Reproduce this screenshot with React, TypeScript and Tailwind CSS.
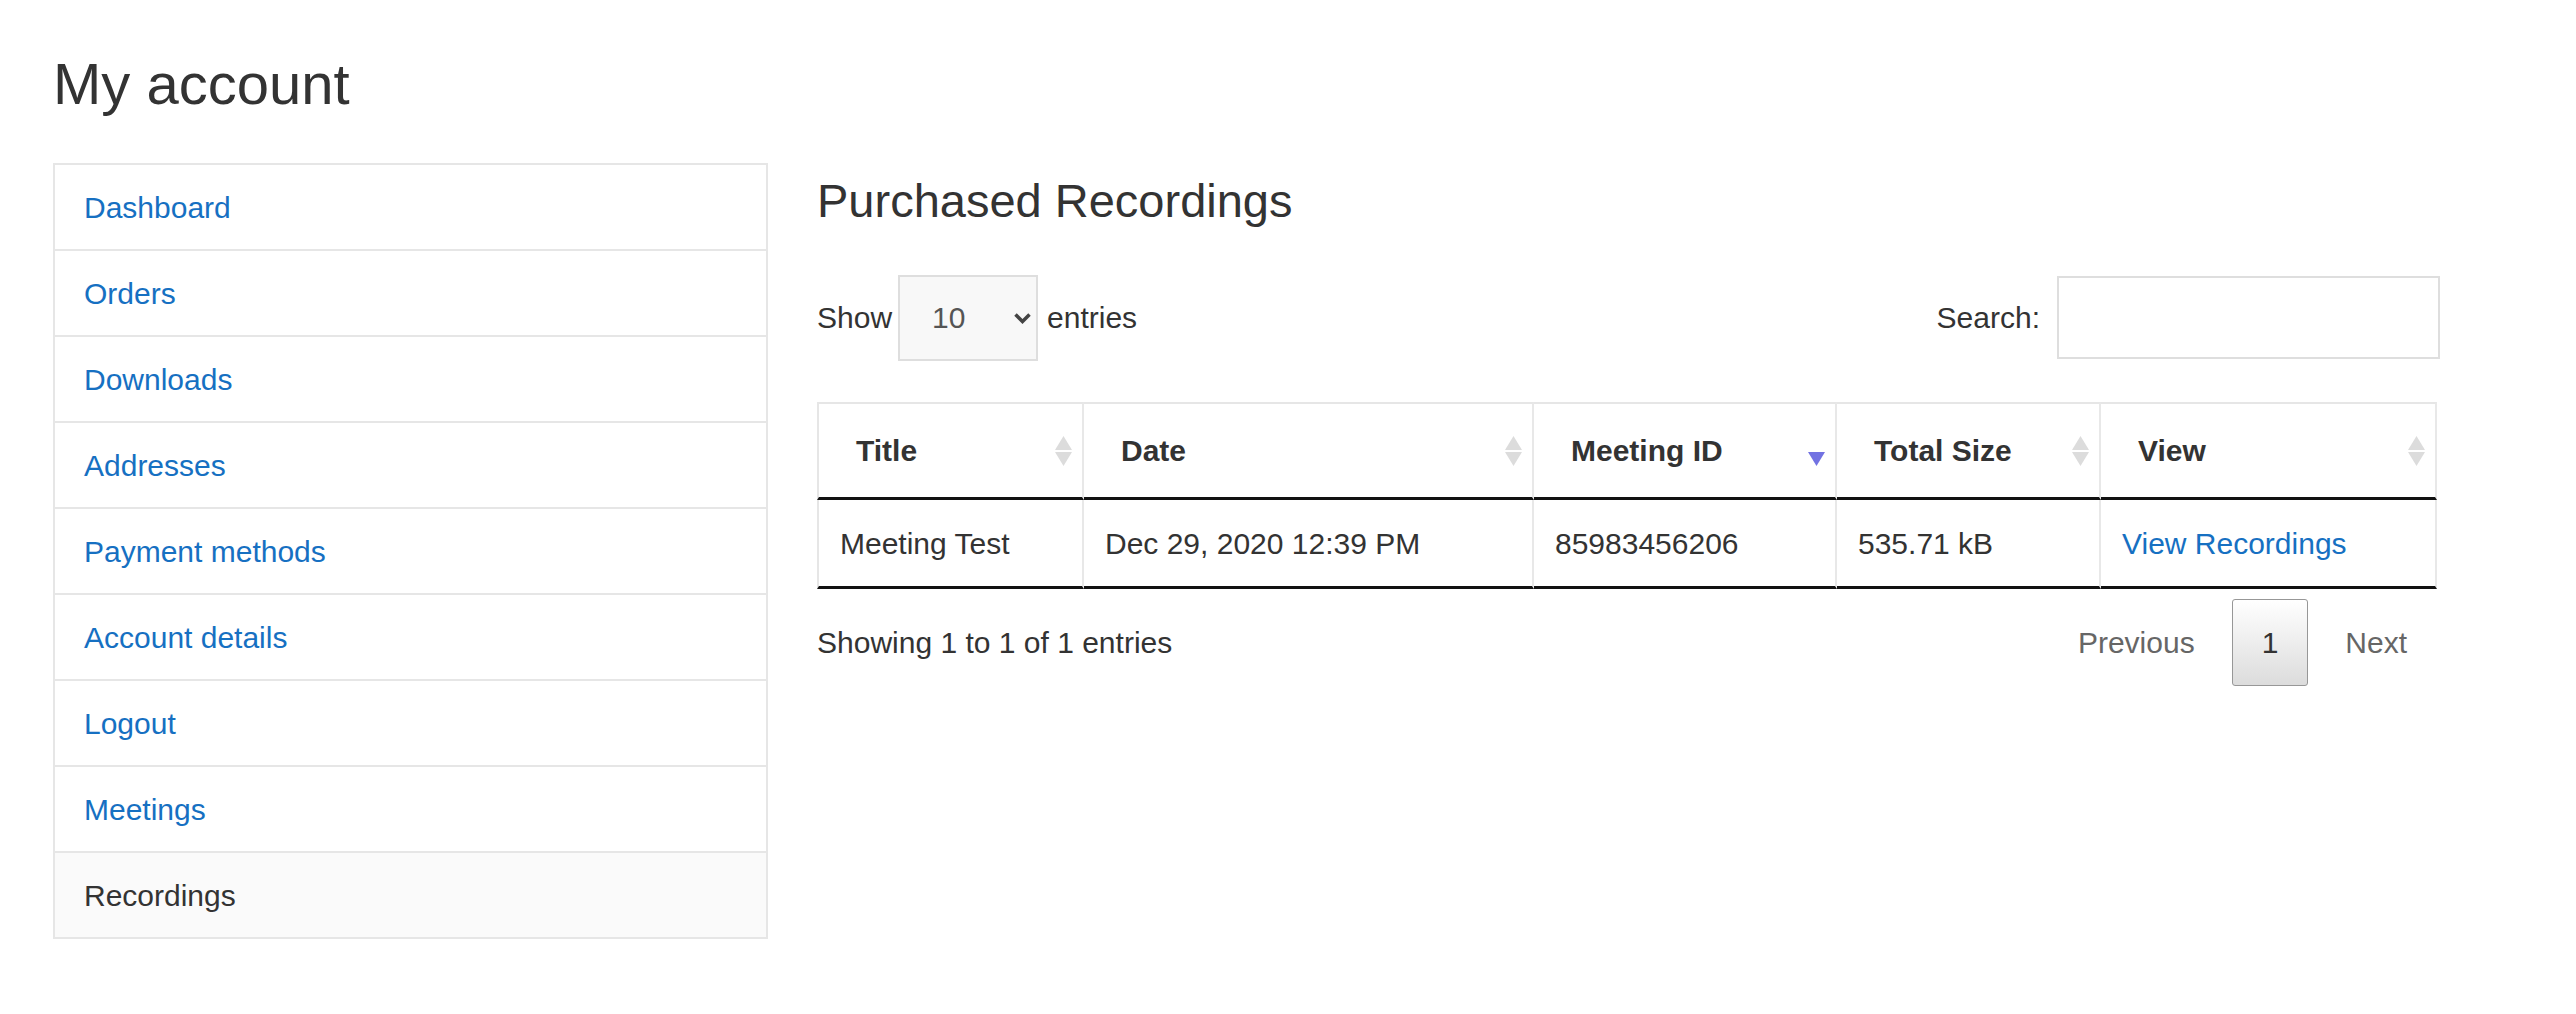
import { useState } from "react";

const navItems = [
  "Dashboard",
  "Orders",
  "Downloads",
  "Addresses",
  "Payment methods",
  "Account details",
  "Logout",
  "Meetings",
  "Recordings",
];

const columns = [
  { label: "Title", width: 267, sort: "both" },
  { label: "Date", width: 450, sort: "both" },
  { label: "Meeting ID", width: 303, sort: "desc" },
  { label: "Total Size", width: 264, sort: "both" },
  { label: "View", width: 336, sort: "both" },
];

function SortIcon({ sort }: { sort: string }) {
  return (
    <svg
      width="17"
      height="30"
      viewBox="0 0 17 30"
      className="absolute right-[10px] top-1/2 -translate-y-1/2"
    >
      {sort === "both" && <polygon points="8.5,0 17,14 0,14" fill="#dcdcdc" />}
      <polygon
        points="0,16 17,16 8.5,30"
        fill={sort === "desc" ? "#7272e2" : "#dcdcdc"}
      />
    </svg>
  );
}

export default function App() {
  const [entries, setEntries] = useState("10");
  const [query, setQuery] = useState("");

  return (
    <div className="min-h-screen bg-white pl-[53px] pt-[55px] font-['Liberation_Sans',Arial,sans-serif] text-[#333]">
      <h1 className="text-[58px] leading-none font-normal">My account</h1>

      <div className="mt-[50px] flex items-start gap-[49px]">
        <nav className="w-[715px] border-2 border-b-0 border-[#e6e6e6]">
          {navItems.map((item) => {
            const active = item === "Recordings";
            return (
              <a
                key={item}
                href="#"
                className={
                  active
                    ? "flex h-[86px] items-center border-b-2 border-[#e6e6e6] bg-[#fafafa] pl-[29px] text-[30px] text-[#333]"
                    : "flex h-[86px] items-center border-b-2 border-[#e6e6e6] pl-[29px] text-[30px] text-[#1670c2]"
                }
              >
                {item}
              </a>
            );
          })}
        </nav>

        <div className="w-[1620px] pt-[14px]">
          <h2 className="text-[47px] leading-none font-normal">Purchased Recordings</h2>

          <div className="mt-[50px] flex h-[87px] items-center justify-between text-[30px]">
            <div className="flex items-center">
              <span>Show</span>
              <div className="relative ml-[6px] h-[86px] w-[140px]">
                <select
                  value={entries}
                  onChange={(e) => setEntries(e.target.value)}
                  className="h-full w-full appearance-none border-2 border-[#dedede] bg-[#f8f8f8] pl-[32px] text-[30px] text-[#555] outline-none"
                >
                  <option value="10">10</option>
                  <option value="25">25</option>
                  <option value="50">50</option>
                  <option value="100">100</option>
                </select>
                <svg
                  width="19"
                  height="12"
                  viewBox="0 0 19 12"
                  className="pointer-events-none absolute right-[6px] top-1/2 -translate-y-1/2"
                >
                  <polyline
                    points="2.5,2.5 9.5,9.5 16.5,2.5"
                    fill="none"
                    stroke="#444"
                    strokeWidth="3.5"
                  />
                </svg>
              </div>
              <span className="ml-[9px]">entries</span>
            </div>

            <div className="-mr-[3px] flex items-center">
              <span>Search:</span>
              <input
                value={query}
                onChange={(e) => setQuery(e.target.value)}
                className="ml-[17px] h-[83px] w-[383px] border-2 border-[#dedede] px-3 text-[30px] outline-none"
              />
            </div>
          </div>

          <table className="mt-[41px] w-[1620px] table-fixed border-separate border-spacing-0 text-[30px]">
            <colgroup>
              {columns.map((c) => (
                <col key={c.label} style={{ width: c.width }} />
              ))}
            </colgroup>
            <thead>
              <tr>
                {columns.map((c, i) => (
                  <th
                    key={c.label}
                    className={
                      (i === 0 ? "border-l-2 " : "") +
                      "relative h-[98px] border-t-2 border-r-2 border-b-[3px] border-t-[#e6e6e6] border-r-[#e8e8e8] border-l-[#e6e6e6] border-b-[#111] pl-[37px] text-left font-bold"
                    }
                  >
                    {c.label}
                    <SortIcon sort={c.sort} />
                  </th>
                ))}
              </tr>
            </thead>
            <tbody>
              <tr>
                {["Meeting Test", "Dec 29, 2020 12:39 PM", "85983456206", "535.71 kB"].map(
                  (v, i) => (
                    <td
                      key={v}
                      className={
                        (i === 0 ? "border-l-2 border-l-[#e6e6e6] " : "") +
                        "h-[89px] border-r-2 border-b-[3px] border-r-[#e8e8e8] border-b-[#111] pl-[21px]"
                      }
                    >
                      {v}
                    </td>
                  )
                )}
                <td className="h-[89px] border-r-2 border-b-[3px] border-r-[#e8e8e8] border-b-[#111] pl-[21px]">
                  <a href="#" className="text-[#1670c2]">
                    View Recordings
                  </a>
                </td>
              </tr>
            </tbody>
          </table>

          <div className="mt-[10px] flex items-center justify-between text-[30px]">
            <span>Showing 1 to 1 of 1 entries</span>
            <div className="flex items-center gap-[7px]">
              <span className="flex h-[87px] items-center px-[30px] text-[#666]">Previous</span>
              <span className="flex h-[87px] items-center rounded-[3px] border border-[#979797] bg-linear-to-b from-white to-[#dcdcdc] px-[29px] text-[#333]">
                1
              </span>
              <span className="flex h-[87px] items-center px-[30px] text-[#666]">Next</span>
            </div>
          </div>
        </div>
      </div>
    </div>
  );
}
